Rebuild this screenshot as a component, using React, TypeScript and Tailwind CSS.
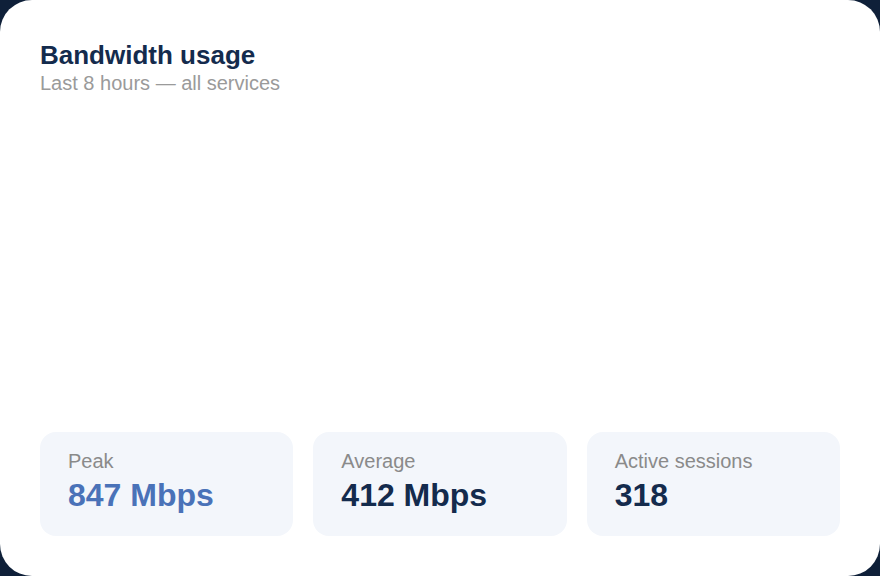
const stats = [
  { label: "Peak", value: "847 Mbps", accent: true },
  { label: "Average", value: "412 Mbps", accent: false },
  { label: "Active sessions", value: "318", accent: false },
];

export default function App() {
  return (
    <main className="h-[576px] w-[880px] bg-[#0f2039] font-['Liberation_Sans',Arial,sans-serif]">
      <div className="flex h-full w-full flex-col justify-between rounded-[32px] bg-white px-10 pb-10 pt-[41px]">
        <div>
          <h1 className="text-[26px] font-bold leading-7 text-[#142b4d]">
            Bandwidth usage
          </h1>
          <p className="text-[20px] leading-7 text-[#9a9a9a]">
            Last 8 hours — all services
          </p>
        </div>

        <div className="grid grid-cols-3 gap-5">
          {stats.map((stat) => (
            <div
              key={stat.label}
              className="h-[104px] rounded-2xl bg-[#f3f6fb] px-7 pt-[18px]"
            >
              <div className="text-[20px] leading-[23px] text-[#8a8a8a]">
                {stat.label}
              </div>
              <div
                className={
                  stat.accent
                    ? "mt-[3px] text-[32px] font-bold leading-[38px] text-[#4a72b8]"
                    : "mt-[3px] text-[32px] font-bold leading-[38px] text-[#142b4d]"
                }
              >
                {stat.value}
              </div>
            </div>
          ))}
        </div>
      </div>
    </main>
  );
}
